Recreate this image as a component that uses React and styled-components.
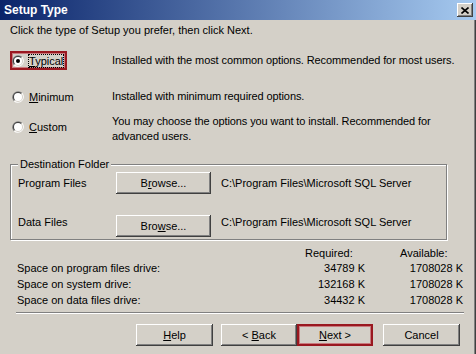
import React from "react"
import styled, { createGlobalStyle } from "styled-components"

const GlobalStyle = createGlobalStyle`
  body {
    margin: 0;
    background: #d4d0c8;
  }
`

const Window = styled.div`
  width: 476px;
  height: 354px;
  overflow: hidden;
  display: flex;
  flex-direction: column;
  background: #d4d0c8;
  color: #000;
  font-family: "Liberation Sans", Arial, sans-serif;
  font-size: 11px;
  box-shadow: inset -1px 0 #404040, inset -2px 0 #808080;
`

const TitleBar = styled.div`
  height: 20px;
  flex: none;
  display: flex;
  align-items: center;
  padding: 0 3px 0 4px;
  background: linear-gradient(to right, #0a246a, #a6caf0);
`

const Title = styled.span`
  color: #fff;
  font-weight: bold;
  font-size: 12px;
`

const CloseButton = styled.div`
  margin-left: auto;
  width: 16px;
  height: 14px;
  display: flex;
  align-items: center;
  justify-content: center;
  background: #d4d0c8;
  box-shadow: inset -1px -1px #404040, inset 1px 1px #fff,
    inset -2px -2px #808080, inset 2px 2px #d4d0c8;
`

const Body = styled.div`
  padding: 4px 0 0 10px;
  display: flex;
  flex-direction: column;
`

const Intro = styled.div`
  line-height: 13px;
`

const OptionRow = styled.div`
  display: grid;
  grid-template-columns: 102px 1fr;
  align-items: center;
  min-height: ${(p) => p.$h}px;
  margin-top: ${(p) => p.$top}px;
`

const Choice = styled.div`
  display: flex;
  align-items: center;
  gap: 5px;
  width: fit-content;
  height: 15px;
  padding-right: 2px;
  margin-bottom: ${(p) => p.$raise || 0}px;
  border: 2px solid ${(p) => (p.$focused ? "#9a1820" : "transparent")};
  box-shadow: ${(p) => (p.$focused ? "inset 0 0 0 1px #c87a7e" : "none")};
`

const ChoiceLabel = styled.span`
  line-height: 12px;
  outline: ${(p) => (p.$focused ? "1px dotted #000" : "none")};
`

const Description = styled.div`
  line-height: 15px;
  letter-spacing: -0.1px;
`

const U = styled.span`
  text-decoration: underline;
`

const GroupBox = styled.div`
  position: relative;
  margin-top: 20px;
  width: 437px;
  box-sizing: border-box;
  padding: 7px 0 10px 7px;
  border: 1px solid #808080;
  box-shadow: inset 1px 1px #fff, 1px 1px #fff;
`

const Legend = styled.span`
  position: absolute;
  top: -7px;
  left: 7px;
  padding: 0 2px;
  line-height: 13px;
  background: #d4d0c8;
`

const FieldRow = styled.div`
  display: grid;
  grid-template-columns: 88px 95px 1fr;
  column-gap: 10px;
  align-items: center;
  height: 22px;
  margin-top: ${(p) => p.$top || 0}px;
`

const PushButton = styled.button`
  width: ${(p) => p.$w || 76}px;
  height: 22px;
  margin: ${(p) => p.$drop * 2 || 0}px ${(p) => p.$gap || 0}px 0 0;
  padding: 0;
  box-sizing: border-box;
  font: inherit;
  color: #000;
  background: #d4d0c8;
  border: ${(p) => (p.$focused ? "2px solid #9a1820" : "none")};
  box-shadow: ${(p) =>
    p.$focused
      ? "inset 0 0 0 1px #c87a7e"
      : "inset -1px -1px #404040, inset 1px 1px #fff, inset -2px -2px #808080, inset 2px 2px #d4d0c8"};
`

const SpaceGrid = styled.div`
  display: grid;
  grid-template-columns: 1fr 60px 63px;
  grid-auto-rows: 16px;
  column-gap: 35px;
  align-items: center;
  width: 446px;
  margin: 4px 0 0 7px;
`

const Head = styled.div`
  height: 14px;
  line-height: 14px;
  align-self: end;
`

const Num = styled.div`
  text-align: right;
`

const Separator = styled.div`
  width: 448px;
  margin: 4px 0 0 6px;
  border-top: 1px solid #808080;
  border-bottom: 1px solid #fff;
`

const ButtonRow = styled.div`
  display: flex;
  justify-content: flex-end;
  margin-top: 10px;
  padding-right: 16px;
`

const Radio = ({ checked }) => (
  <svg width="12" height="12" viewBox="0 0 12 12">
    <path d="M1.76 10.24 A6 6 0 0 1 10.24 1.76 Z" fill="#808080" />
    <path d="M10.24 1.76 A6 6 0 0 1 1.76 10.24 Z" fill="#fff" />
    <path d="M2.46 9.54 A5 5 0 0 1 9.54 2.46 Z" fill="#404040" />
    <path d="M9.54 2.46 A5 5 0 0 1 2.46 9.54 Z" fill="#d4d0c8" />
    <circle cx="6" cy="6" r="4" fill="#fff" />
    {checked && <circle cx="6" cy="6" r="2" fill="#000" />}
  </svg>
)

const options = [
  {
    key: "typical",
    letter: "T",
    rest: "ypical",
    text: "Installed with the most common options. Recommended for most users.",
    checked: true,
    h: 19,
    top: 14,
  },
  {
    key: "minimum",
    letter: "M",
    rest: "inimum",
    text: "Installed with minimum required options.",
    h: 19,
    top: 17,
  },
  {
    key: "custom",
    letter: "C",
    rest: "ustom",
    text: (
      <>
        You may choose the options you want to install. Recommended for
        <br />
        advanced users.
      </>
    ),
    h: 30,
    top: 8,
    raise: 5,
  },
]

const spaces = [
  ["Space on program files drive:", "34789 K", "1708028 K"],
  ["Space on system drive:", "132168 K", "1708028 K"],
  ["Space on data files drive:", "34432 K", "1708028 K"],
]

export default function App() {
  return (
    <>
      <GlobalStyle />
      <Window>
        <TitleBar>
          <Title>Setup Type</Title>
          <CloseButton>
            <svg width="8" height="7" viewBox="0 0 8 7">
              <path d="M0.5 0.5 L7.5 6.5 M7.5 0.5 L0.5 6.5" stroke="#000" strokeWidth="1.6" />
            </svg>
          </CloseButton>
        </TitleBar>
        <Body>
          <Intro>Click the type of Setup you prefer, then click Next.</Intro>

          {options.map((o) => (
            <OptionRow key={o.key} $h={o.h} $top={o.top}>
              <Choice $focused={o.checked} $raise={o.raise}>
                <Radio checked={o.checked} />
                <ChoiceLabel $focused={o.checked}>
                  <U>{o.letter}</U>
                  {o.rest}
                </ChoiceLabel>
              </Choice>
              <Description>{o.text}</Description>
            </OptionRow>
          ))}

          <GroupBox>
            <Legend>Destination Folder</Legend>
            <FieldRow>
              <span>Program Files</span>
              <PushButton $w={95}>
                B<U>r</U>owse...
              </PushButton>
              <span>C:\Program Files\Microsoft SQL Server</span>
            </FieldRow>
            <FieldRow $top={13}>
              <span>Data Files</span>
              <PushButton $w={95} $drop={4}>
                Bro<U>w</U>se...
              </PushButton>
              <span>C:\Program Files\Microsoft SQL Server</span>
            </FieldRow>
          </GroupBox>

          <SpaceGrid>
            <Head />
            <Head>Required:</Head>
            <Head>Available:</Head>
            {spaces.map(([label, req, avail]) => (
              <React.Fragment key={label}>
                <div>{label}</div>
                <Num>{req}</Num>
                <Num>{avail}</Num>
              </React.Fragment>
            ))}
          </SpaceGrid>

          <Separator />

          <ButtonRow>
            <PushButton $w={77} $gap={8}>
              <U>H</U>elp
            </PushButton>
            <PushButton>
              &lt; <U>B</U>ack
            </PushButton>
            <PushButton $focused $gap={10}>
              <U>N</U>ext &gt;
            </PushButton>
            <PushButton $w={77}>Cancel</PushButton>
          </ButtonRow>
        </Body>
      </Window>
    </>
  )
}
